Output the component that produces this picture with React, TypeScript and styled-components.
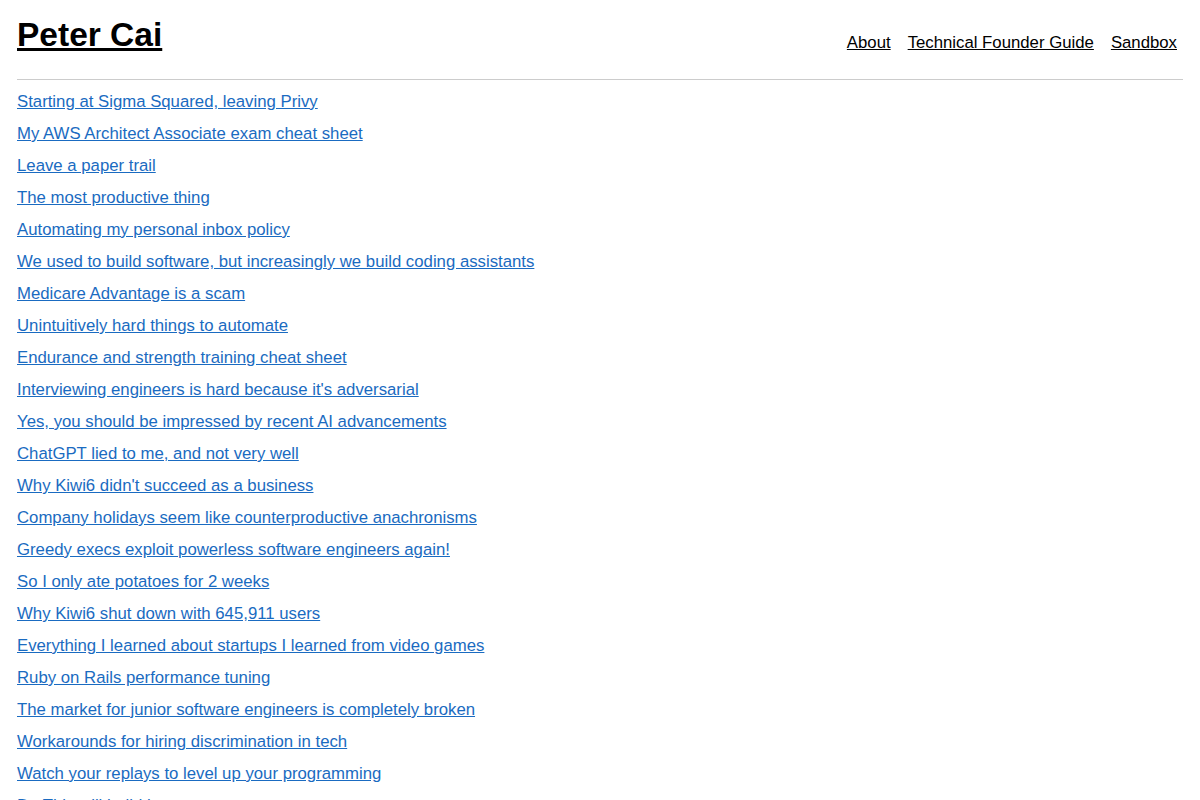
import React from 'react';
import styled, { createGlobalStyle } from 'styled-components';

const posts = [
  'Starting at Sigma Squared, leaving Privy',
  'My AWS Architect Associate exam cheat sheet',
  'Leave a paper trail',
  'The most productive thing',
  'Automating my personal inbox policy',
  'We used to build software, but increasingly we build coding assistants',
  'Medicare Advantage is a scam',
  'Unintuitively hard things to automate',
  'Endurance and strength training cheat sheet',
  "Interviewing engineers is hard because it's adversarial",
  'Yes, you should be impressed by recent AI advancements',
  'ChatGPT lied to me, and not very well',
  "Why Kiwi6 didn't succeed as a business",
  'Company holidays seem like counterproductive anachronisms',
  'Greedy execs exploit powerless software engineers again!',
  'So I only ate potatoes for 2 weeks',
  'Why Kiwi6 shut down with 645,911 users',
  'Everything I learned about startups I learned from video games',
  'Ruby on Rails performance tuning',
  'The market for junior software engineers is completely broken',
  'Workarounds for hiring discrimination in tech',
  'Watch your replays to level up your programming',
  'Do This will build it',
];

const App: React.FC = () => {
  return (
    <>
      <GlobalStyle />
      <Page>
        <Header>
          <Title href="#">Peter Cai</Title>
          <Nav>
            <NavLink href="#">About</NavLink>
            <NavLink href="#">Technical Founder Guide</NavLink>
            <NavLink href="#">Sandbox</NavLink>
          </Nav>
        </Header>
        <PostList>
          {posts.map((post) => (
            <PostItem key={post}>
              <PostLink href="#">{post}</PostLink>
            </PostItem>
          ))}
        </PostList>
      </Page>
    </>
  );
};

const GlobalStyle = createGlobalStyle`
  body {
    margin: 0;
    background: #fff;
    font-family: "Liberation Sans", Arial, sans-serif;
    font-size: 16.75px;
    color: #000;
  }
`;

const Page = styled.div`
  padding: 0 17px;
`;

const Header = styled.header`
  height: 79px;
  display: flex;
  justify-content: space-between;
  align-items: flex-start;
  border-bottom: 1px solid #cccccc;
`;

const Title = styled.a`
  margin-top: 15px;
  font-size: 33.5px;
  font-weight: bold;
  line-height: 40px;
  color: #000;
  text-decoration: underline;
`;

const Nav = styled.nav`
  display: flex;
  gap: 17px;
  margin-top: 33px;
  padding-right: 6px;
`;

const NavLink = styled.a`
  color: #000;
  line-height: 20px;
  text-decoration: underline;
`;

const PostList = styled.ul`
  list-style: none;
  margin: 0;
  padding: 6px 0 0;
`;

const PostItem = styled.li`
  line-height: 32px;
`;

const PostLink = styled.a`
  color: #1a6bc1;
  text-decoration: underline;
`;

export default App;
